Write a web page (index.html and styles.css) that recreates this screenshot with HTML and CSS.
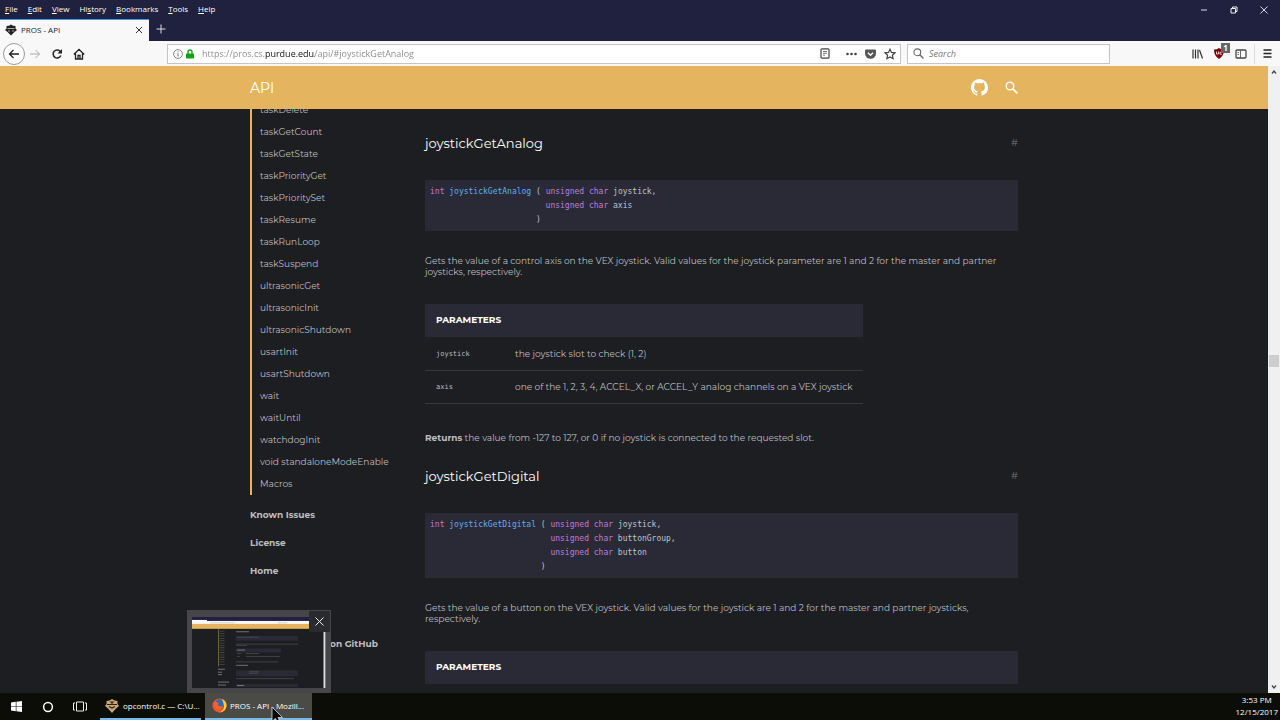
FILE: index.html
```
<!DOCTYPE html>
<html lang="en">
<head>
  <meta charset="UTF-8">
  <title>PROS - API</title>
  <link rel="stylesheet" href="styles.css">
</head>
<body>
  <!-- browser -->
  <div class="titlebar">
    <div class="titlebar-left">
      <nav class="menubar">
        <button><u>F</u>ile</button>
        <button><u>E</u>dit</button>
        <button><u>V</u>iew</button>
        <button>Hi<u>s</u>tory</button>
        <button><u>B</u>ookmarks</button>
        <button><u>T</u>ools</button>
        <button><u>H</u>elp</button>
      </nav>
      <div class="tabs">
        <div class="tab">
          <svg width="12" height="12" viewBox="0 0 12 12"><path fill="#222" d="M6 .5l2 1.200 2.500.3v2.500L12 6l-2.500 2L6 11.500 2.500 8 0 6l1.500-1.500V2L4 1.700z"/><path fill="none" stroke="#ccc" stroke-width=".8" d="M2.500 4.500h7M4 6v2M8 6v2"/></svg>
          <span>PROS - API</span>
          <button class="icon-btn" aria-label="Close tab"><svg width="8" height="8" viewBox="0 0 8 8"><path d="M1 1l6 6M7 1L1 7" stroke="#333" fill="none"/></svg></button>
        </div>
        <button class="icon-btn new-tab" aria-label="New tab"><svg width="10" height="10" viewBox="0 0 10 10"><path d="M5 .5v9M.5 5h9" stroke="#ddd" fill="none"/></svg></button>
      </div>
    </div>
    <div class="window-buttons">
      <button class="icon-btn" aria-label="Minimize"><svg width="8" height="8" viewBox="0 0 8 8"><path d="M1 4h6" stroke="#ddd"/></svg></button>
      <button class="icon-btn" aria-label="Restore"><svg width="8" height="8" viewBox="0 0 8 8"><path d="M1 2.500h4.500V7H1zM2.500 2.500V1H7v4.500H5.500" stroke="#eee" fill="none"/></svg></button>
      <button class="icon-btn" aria-label="Close"><svg width="8" height="8" viewBox="0 0 8 8"><path d="M.5.5l7 7M7.500.5l-7 7" stroke="#ddd" fill="none"/></svg></button>
    </div>
  </div>

  <div class="toolbar">
    <div class="nav-buttons">
      <button class="back" aria-label="Back"><svg width="12" height="12" viewBox="0 0 12 12"><path d="M11 6H1.500M5.500 2l-4 4 4 4" stroke="#222" stroke-width="1.300" fill="none"/></svg></button>
      <button class="icon-btn" aria-label="Forward"><svg width="12" height="12" viewBox="0 0 12 12"><path d="M1 6h9.500M6.500 2l4 4-4 4" stroke="#aaa" fill="none"/></svg></button>
      <button class="icon-btn" aria-label="Reload"><svg width="12" height="12" viewBox="0 0 12 12"><path d="M9.800 7.500A4 4 0 1 1 9.300 3.500" stroke="#222" stroke-width="1.500" fill="none"/><path d="M11 1v4.500H6.500z" fill="#222"/></svg></button>
      <button class="icon-btn" aria-label="Home"><svg width="12" height="12" viewBox="0 0 12 12"><path d="M.8 6.500L6 1.300l5.200 5.200M2.500 5.500V11h7V5.500M5 11V7.500h2V11" stroke="#222" stroke-width="1.300" fill="none"/></svg></button>
    </div>
    <div class="urlbar">
      <svg width="10" height="10" viewBox="0 0 10 10"><circle cx="5" cy="5" r="4.400" fill="none" stroke="#777" stroke-width=".9"/><path d="M5 4.200v3.300M5 2.300v1" stroke="#777"/></svg>
      <svg width="8" height="10" viewBox="0 0 8 10"><path d="M2 5V3a2 2 0 0 1 4 0v2" stroke="#12a312" stroke-width="1.400" fill="none"/><rect y="4.500" width="8" height="5" rx=".7" fill="#12a312"/></svg>
      <input class="url" type="text" aria-label="Address" value="https://pros.cs.purdue.edu/api/#joystickGetAnalog">
      <button class="icon-btn reader" aria-label="Reader view"><svg width="10" height="11" viewBox="0 0 10 11"><rect x="1" y=".8" width="8" height="9.400" rx="1" stroke="#444" stroke-width="1.200" fill="none"/><path d="M3 3.500h4M3 5.300h4M3 7.100h2" stroke="#555" stroke-width=".8"/></svg></button>
      <button class="icon-btn" aria-label="Page actions"><svg width="11" height="10" viewBox="0 0 11 10"><g fill="#444"><circle cx="1.500" cy="5" r="1.300"/><circle cx="5.500" cy="5" r="1.300"/><circle cx="9.500" cy="5" r="1.300"/></g></svg></button>
      <button class="icon-btn" aria-label="Save to Pocket"><svg width="11" height="10" viewBox="0 0 11 10"><path d="M1 .5h9q1 0 1 1V4.500a5.500 5.200 0 0 1-11 0V1.500q0-1 1-1z" fill="#555"/><path d="M3 3.800l2.500 2.400L8 3.800" stroke="#fff" stroke-width="1.400" fill="none"/></svg></button>
      <button class="icon-btn" aria-label="Bookmark"><svg width="12" height="12" viewBox="0 0 12 12"><path d="M6 1.200l1.500 3.200 3.500.4-2.600 2.400.7 3.500L6 9l-3.100 1.700.7-3.500L1 4.800l3.500-.4z" stroke="#444" stroke-width="1.200" fill="none"/></svg></button>
    </div>
    <div class="searchbar">
      <svg width="11" height="11" viewBox="0 0 11 11"><circle cx="4.300" cy="4.300" r="3.400" fill="none" stroke="#666" stroke-width="1.100"/><path d="M6.800 6.800l3.700 3.700" stroke="#666" stroke-width="1.300"/></svg>
      <input type="search" aria-label="Search" placeholder="Search">
    </div>
    <div class="extras">
      <button class="icon-btn" aria-label="Library"><svg width="11" height="10" viewBox="0 0 11 10"><path d="M1 .5v9M3.500 .5v9M6 .5v9M7.500 1l3 8.500" stroke="#333" stroke-width="1.200" fill="none"/></svg></button>
      <button class="icon-btn ublock" aria-label="uBlock"><svg width="10" height="11" viewBox="0 0 10 11"><path d="M5 0q2 1.500 5 1.500Q10 8 5 11 0 8 0 1.500 3 1.500 5 0z" fill="#800008"/><path d="M2.500 3.500v2.500h2V3.500M7.800 4.200H6v2h1.800" stroke="#fff" stroke-width=".8" fill="none"/></svg><span class="badge">1</span></button>
      <button class="icon-btn" aria-label="Sidebars"><svg width="12" height="10" viewBox="0 0 12 10"><rect x="1" y="1" width="10" height="8" rx="1" stroke="#444" stroke-width="1.300" fill="none"/><path d="M5.500 1v8M2.500 3.500H4M2.500 5.500H4" stroke="#555" stroke-width=".9"/></svg></button>
      <button class="icon-btn menu" aria-label="Menu"><svg width="9" height="9" viewBox="0 0 9 9"><path d="M.5 1h8M.5 4.500h8M.5 8h8" stroke="#222" stroke-width="1.300"/></svg></button>
    </div>
  </div>

  <!-- page -->
  <div class="viewport">
    <div class="page">
      <header class="header">
        <div class="inner header-inner">
          <a class="header-title" href="#">API</a>
          <a href="#" aria-label="GitHub"><svg width="17" height="17" viewBox="0 0 16 16"><path fill="#fff" d="M8 0C3.580 0 0 3.580 0 8c0 3.540 2.290 6.530 5.470 7.590.4.070.55-.17.55-.38 0-.19-.01-.82-.01-1.490-2.010.37-2.530-.49-2.690-.94-.09-.23-.48-.94-.82-1.130-.28-.15-.68-.52-.01-.53.63-.01 1.080.58 1.230.82.72 1.210 1.870.87 2.330.66.07-.52.28-.87.51-1.070-1.780-.2-3.640-.89-3.640-3.950 0-.87.31-1.590.82-2.150-.08-.2-.36-1.020.08-2.120 0 0 .67-.21 2.200.82a7.600 7.600 0 0 1 4 0c1.530-1.040 2.200-.82 2.200-.82.44 1.100.16 1.920.08 2.120.51.56.82 1.270.82 2.150 0 3.070-1.870 3.750-3.650 3.950.29.25.54.73.54 1.480 0 1.070-.01 1.930-.01 2.200 0 .21.15.46.55.38A8 8 0 0 0 16 8c0-4.420-3.580-8-8-8z"/></svg></a>
          <button class="icon-btn" aria-label="Search docs"><svg width="13" height="13" viewBox="0 0 13 13"><circle cx="5" cy="5" r="3.800" fill="none" stroke="#fff" stroke-width="1.400"/><path d="M7.800 7.800l4.500 4.500" stroke="#fff" stroke-width="1.700"/></svg></button>
        </div>
      </header>
      <div class="inner content">
        <aside class="sidebar">
          <ul class="functions">
            <li><a href="#">taskDelete</a></li>
            <li><a href="#">taskGetCount</a></li>
            <li><a href="#">taskGetState</a></li>
            <li><a href="#">taskPriorityGet</a></li>
            <li><a href="#">taskPrioritySet</a></li>
            <li><a href="#">taskResume</a></li>
            <li><a href="#">taskRunLoop</a></li>
            <li><a href="#">taskSuspend</a></li>
            <li><a href="#">ultrasonicGet</a></li>
            <li><a href="#">ultrasonicInit</a></li>
            <li><a href="#">ultrasonicShutdown</a></li>
            <li><a href="#">usartInit</a></li>
            <li><a href="#">usartShutdown</a></li>
            <li><a href="#">wait</a></li>
            <li><a href="#">waitUntil</a></li>
            <li><a href="#">watchdogInit</a></li>
            <li><a href="#">void standaloneModeEnable</a></li>
            <li><a href="#">Macros</a></li>
          </ul>
          <ul class="links">
            <li><a href="#">Known Issues</a></li>
            <li><a href="#">License</a></li>
            <li><a href="#">Home</a></li>
          </ul>
          <a class="github-link" href="#">on GitHub</a>
        </aside>
        <main class="docs">
          <h2>joystickGetAnalog <a href="#joystickGetAnalog">#</a></h2>
          <div class="signature">
            <div><b>int</b> <i>joystickGetAnalog</i> ( <b>unsigned char</b> joystick,</div>
            <div>                        <b>unsigned char</b> axis</div>
            <div>                      )</div>
          </div>
          <p>Gets the value of a control axis on the VEX joystick. Valid values for the joystick parameter are 1 and 2 for the master and partner joysticks, respectively.</p>
          <table>
            <thead><tr><th colspan="2">PARAMETERS</th></tr></thead>
            <tbody>
              <tr><td><code>joystick</code></td><td>the joystick slot to check (1, 2)</td></tr>
              <tr><td><code>axis</code></td><td>one of the 1, 2, 3, 4, ACCEL_X, or ACCEL_Y analog channels on a VEX joystick</td></tr>
            </tbody>
          </table>
          <p class="returns"><strong>Returns</strong> the value from -127 to 127, or 0 if no joystick is connected to the requested slot.</p>

          <h2>joystickGetDigital <a href="#joystickGetDigital">#</a></h2>
          <div class="signature">
            <div><b>int</b> <i>joystickGetDigital</i> ( <b>unsigned char</b> joystick,</div>
            <div>                         <b>unsigned char</b> buttonGroup,</div>
            <div>                         <b>unsigned char</b> button</div>
            <div>                       )</div>
          </div>
          <p>Gets the value of a button on the VEX joystick. Valid values for the joystick are 1 and 2 for the master and partner joysticks, respectively.</p>
          <table class="wide">
            <thead><tr><th colspan="2">PARAMETERS</th></tr></thead>
          </table>
        </main>
      </div>
    </div>
    <div class="scrollbar">
      <svg width="12" height="12" viewBox="0 0 12 12"><path d="M4 7.500l2-2.500 2 2.500" stroke="#444" stroke-width="1.300" fill="none"/></svg>
      <div class="thumb"></div>
      <svg class="down" width="12" height="12" viewBox="0 0 12 12"><path d="M4 4.500L6 7l2-2.500" stroke="#444" stroke-width="1.300" fill="none"/></svg>
    </div>
  </div>

  <!-- taskbar -->
  <footer class="taskbar">
    <button class="task-icon" aria-label="Start"><svg width="11" height="11" viewBox="0 0 11 11"><path fill="#fff" d="M0 1.500L4.800.8v4.400H0zM5.400.7L11 0v5.200H5.400zM0 5.800h4.800v4.400L0 9.500zM5.400 5.800H11V11l-5.600-.7z"/></svg></button>
    <button class="task-icon" aria-label="Cortana"><svg width="12" height="12" viewBox="0 0 12 12"><circle cx="6" cy="6" r="4.400" fill="none" stroke="#fff" stroke-width="1.500"/></svg></button>
    <button class="task-icon" aria-label="Task view"><svg width="14" height="11" viewBox="0 0 14 11"><path d="M3.500 1h7v9h-7zM2 2H.5v7H2M12 2h1.500v7H12" stroke="#eee" fill="none"/></svg></button>
    <button class="task"><svg width="14" height="14" viewBox="0 0 14 14"><path fill="#c9a675" d="M7 0l2.500 1.500 3 .5v3L14 7l-3 2.500L7 14 3 9.500 0 7l1.500-2V2l3-.5z"/><path d="M2 5.500h10M4 7.500L7 9l3-1.500M5 3h4M7 3v3" stroke="#2b2119" stroke-width="1.200" fill="none"/></svg><span>opcontrol.c — C:\U...</span></button>
    <button class="task active">
      <svg width="15" height="15" viewBox="0 0 16 16"><circle cx="8" cy="8" r="7.500" fill="#f0542b"/><circle cx="8.500" cy="6.500" r="5.200" fill="#2a6fb5"/><path d="M1 4.500Q3 5 4 4l3 1-1 2.500L8.500 9 12 8.500Q11 12 7.500 12.500 3.500 12 2.500 8z" fill="#f5612c"/><path d="M10 .8Q16 3 15.500 9 14 15 8 15.500 14 12 12.500 7 12 3 10 .8z" fill="#ffcb32"/></svg>
      <span>PROS - API - Mozill...</span>
    </button>
    <div class="clock"><span>3:53 PM</span><span>12/15/2017</span></div>
    <div class="preview">
      <svg class="preview-shot" viewBox="0 0 134 72" preserveAspectRatio="none">
        <rect width="134" height="72" fill="#1d1e22"/>
        <rect width="134" height="4" fill="#20203f"/>
        <rect y="3" width="15" height="2" fill="#fff"/>
        <rect y="4" width="134" height="4" fill="#f7f7f7"/>
        <rect y="7" width="134" height="5" fill="#e4b55e"/>
        <path d="M18 5.800h25M86 5.800h9" stroke="#bbb" stroke-width=".6"/>
        <path d="M26.500 12v38" stroke="#9b7d45" stroke-width=".7"/>
        <path d="M30 14v36" stroke="#777" stroke-width="5" stroke-dasharray=".8 1.600" opacity=".5"/>
        <path fill="#292a36" d="M44 19h62v5H44zM44 32h45v4H44zM44 54h62v6H44zM44 68h62v3H44z"/>
        <path d="M44 15h13M44 49h12M45 33.500h8M45 69.500h7M26 53h7M26 56h4M26 58.500h4M26 66h11M26 69h8" stroke="#aaa" stroke-width=".6"/>
        <path d="M44 27.500h62M44 28.800h11M45 37h4M54 37h13M45 40h3M54 40h34M44 45.500h42M44 62.500h58M57 55.500h10M57 57h9M45 20.500h22" stroke="#666" stroke-width=".5"/>
        <path d="M132.500 9v63" stroke="#ddd" stroke-width="2"/>
      </svg>
      <button class="preview-close" aria-label="Close window"><svg width="9" height="9" viewBox="0 0 9 9"><path d="M.5.5l8 8M8.500.5l-8 8" stroke="#eee" fill="none"/></svg></button>
    </div>
    <svg class="cursor" width="12" height="17" viewBox="0 0 12 17"><path d="M1 0v14.500l3.500-3.200L7 17l2.500-1-2.500-5.500h4.500z" fill="#000" stroke="#ddd" stroke-width=".8"/></svg>
  </footer>
</body>
</html>
```
FILE: styles.css
```
* {
  box-sizing: border-box;
}
body {
  margin: 0;
  height: 100vh;
  display: flex;
  flex-direction: column;
  overflow: hidden;
  font-family: "Open Sans", "Noto Sans", sans-serif;
  font-size: 8px;
  background: #1d1e22;
}
button {
  border: 0;
  padding: 0;
  background: none;
  color: inherit;
  font: inherit;
}
a {
  color: inherit;
  text-decoration: none;
}
svg {
  display: block;
  flex: none;
}
ul {
  list-style: none;
  margin: 0;
  padding: 0;
}
.icon-btn {
  display: flex;
  align-items: center;
  justify-content: center;
}

/* browser */
.titlebar {
  display: flex;
  justify-content: space-between;
  background: #20203f;
  color: #fff;
}
.menubar {
  display: flex;
  gap: 10px;
  height: 19px;
  padding: 0 5px 3px;
}
.tabs {
  display: flex;
  height: 22px;
}
.tab {
  display: flex;
  align-items: center;
  gap: 4px;
  width: 149px;
  padding: 0 6px 2px 5px;
  border-top: 1px solid #3c9be8;
  background: #f8f8f9;
  color: #222;
}
.tab span {
  flex: 1;
}
.new-tab {
  width: 24px;
  padding-bottom: 2px;
}
.window-buttons {
  display: flex;
  gap: 22px;
  height: 19px;
  padding-right: 12px;
}
.toolbar {
  display: flex;
  align-items: center;
  height: 25px;
  padding: 0 8px 0 3px;
  background: #f8f8f9;
}
.nav-buttons {
  display: flex;
  align-items: center;
  gap: 10px;
  width: 164px;
}
.back {
  display: flex;
  align-items: center;
  justify-content: center;
  width: 22px;
  height: 22px;
  margin-right: -6px;
  border: 1px solid #999;
  border-radius: 50%;
  background: #fff;
}
.urlbar,
.searchbar {
  display: flex;
  align-items: center;
  height: 20px;
  border: 1px solid #c4c4ca;
  background: #fff;
}
.urlbar {
  flex: 1;
  gap: 8px;
  padding: 0 4px 0 5px;
}
.urlbar svg + svg {
  margin-left: -5px;
}
.toolbar input {
  flex: 1;
  min-width: 0;
  padding: 0;
  border: 0;
  outline: 0;
  background: none;
  font: inherit;
}
/* the domain is darker than the rest of the address */
.toolbar .url {
  font-size: 9px;
  color: transparent;
  background: linear-gradient(to right, #888 63px, #111 63px, #111 113px, #888 113px);
  background-clip: text;
  -webkit-background-clip: text;
}
.reader {
  padding-right: 8px;
}
.searchbar {
  gap: 5px;
  width: 203px;
  margin-left: 6px;
  padding: 0 5px;
}
.toolbar .searchbar input {
  font-size: 9px;
  font-style: italic;
}
.searchbar input::placeholder {
  color: #777;
}
.extras {
  display: flex;
  align-items: center;
  gap: 11px;
  padding-left: 82px;
}
.ublock {
  position: relative;
}
.badge {
  position: absolute;
  top: -5px;
  left: 7px;
  width: 9px;
  height: 10px;
  line-height: 10px;
  background: #666;
  color: #fff;
  font-weight: bold;
}
.menu {
  height: 20px;
  padding-left: 8px;
  margin-left: -4px;
  border-left: 1px solid #ddd;
}

/* page */
.viewport {
  flex: 1;
  min-height: 0;
  display: flex;
}
.page {
  flex: 1;
  overflow: hidden;
  font-family: Montserrat, Inter, sans-serif;
  color: #bdbdc0;
}
.inner {
  max-width: 768px;
  margin: 0 auto;
}
.header {
  position: relative;
  background: #e4b55e;
  color: #fff;
}
.header-inner {
  display: flex;
  align-items: center;
  gap: 17px;
  height: 43px;
}
.header-title {
  flex: 1;
  font-size: 14px;
}
.content {
  display: flex;
}
.sidebar {
  width: 175px;
  font-size: 9px;
}
.functions {
  margin-top: -10px;
  padding-left: 8px;
  border-left: 2px solid #e4b55e;
}
.functions li {
  line-height: 22px;
}
.links {
  padding-top: 6px;
  line-height: 28px;
  font-weight: bold;
}
.github-link {
  display: block;
  padding: 45px 0 0 80px;
  line-height: 28px;
  font-weight: bold;
}
.docs {
  flex: 1;
  min-width: 0;
  padding-top: 22px;
  font-size: 9px;
  line-height: 11px;
}
.docs h2 {
  display: flex;
  justify-content: space-between;
  margin: 0 0 25px;
  font-size: 13px;
  font-weight: 400;
  line-height: 24px;
  color: #fff;
}
.docs h2 a {
  font-size: 10px;
  color: #77777b;
}
.signature {
  margin-bottom: 24px;
  padding: 5px 5px 4px;
  background: #292a36;
  color: #bfc3cc;
  font-family: "DejaVu Sans Mono", monospace;
  font-size: 8px;
  line-height: 14px;
}
.signature div {
  white-space: pre;
}
.signature b {
  font-weight: 400;
  color: #c07bd8;
}
.signature i {
  font-style: normal;
  color: #62aeea;
}
.docs p {
  margin: 0 0 27px;
}
.docs .returns {
  margin: 0 0 21px;
}
table {
  margin-bottom: 28px;
  border-collapse: collapse;
}
.wide {
  width: 100%;
}
th {
  height: 33px;
  padding: 0 11px 2px;
  background: #292a36;
  color: #fff;
  text-align: left;
}
td {
  height: 33px;
  padding: 0 11px;
  border-bottom: 1px solid #37383c;
}
td:first-child {
  width: 79px;
}
td + td {
  padding-right: 10px;
}
code {
  font-family: "DejaVu Sans Mono", monospace;
  font-size: 7px;
}
.scrollbar {
  display: grid;
  grid-template-rows: 12px 277fr 12px 326fr;
  width: 12px;
  background: #f0f0f0;
}
.thumb {
  grid-row: 3;
  margin: 0 1px;
  background: #cdcdcd;
}
.down {
  grid-row: 4;
  align-self: end;
}

/* taskbar */
.taskbar {
  position: relative;
  display: flex;
  height: 27px;
  background: #0c0d06;
  color: #fff;
}
.task-icon {
  display: flex;
  align-items: center;
  justify-content: center;
  width: 32px;
}
.task {
  display: flex;
  align-items: center;
  gap: 4px;
  width: 101px;
  margin-left: 4px;
  padding: 0 5px;
  border-bottom: 2px solid #76b9ed;
  white-space: nowrap;
}
.task.active {
  width: 107px;
  padding: 0 7px;
  gap: 3px;
  background: #4b4b46;
}
.clock {
  display: flex;
  flex-direction: column;
  align-items: center;
  margin-left: auto;
  padding: 1px 2px 0 0;
  line-height: 12px;
}
.preview {
  position: absolute;
  left: 187px;
  bottom: 100%;
  width: 144px;
  height: 83px;
  padding: 7px 5px 5px;
  background: #46464a;
}
.preview-shot {
  width: 100%;
  height: 100%;
}
.preview-close {
  position: absolute;
  top: 1px;
  right: 1px;
  display: flex;
  align-items: center;
  justify-content: center;
  width: 21px;
  height: 21px;
  background: #2a2b2f;
}
.cursor {
  position: absolute;
  left: 271px;
  top: 14px;
}
```
